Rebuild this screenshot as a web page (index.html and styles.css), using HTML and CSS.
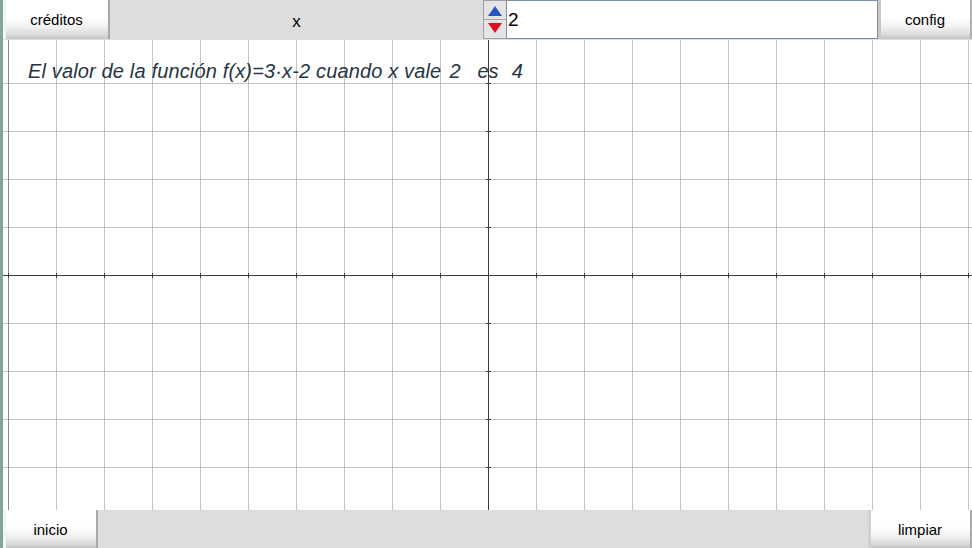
FILE: index.html
```html
<!DOCTYPE html>
<html>
<head>
<meta charset="utf-8">
<link rel="stylesheet" href="styles.css">
</head>
<body>
<div class="app">
  <div class="bar top">
    <button class="btn btn-creditos">créditos</button>
    <div class="label">x</div>
    <div class="spinner">
      <div class="spin up"><svg width="14" height="10" viewBox="0 0 14 10"><polygon points="7,0 14,10 0,10" fill="#2a55c8"/></svg></div>
      <div class="spin down"><svg width="14" height="10" viewBox="0 0 14 10"><polygon points="0,0 14,0 7,10" fill="#e01020"/></svg></div>
    </div>
    <div class="field">2</div>
    <button class="btn btn-config">config</button>
  </div>
  <div class="canvas">
    <svg class="grid" width="969" height="470" viewBox="0 0 969 470">
      <g stroke="#c4c4c4" stroke-width="1" shape-rendering="crispEdges">
        <line x1="53.5" y1="0" x2="53.5" y2="470"/>
        <line x1="101.5" y1="0" x2="101.5" y2="470"/>
        <line x1="149.5" y1="0" x2="149.5" y2="470"/>
        <line x1="197.5" y1="0" x2="197.5" y2="470"/>
        <line x1="245.5" y1="0" x2="245.5" y2="470"/>
        <line x1="293.5" y1="0" x2="293.5" y2="470"/>
        <line x1="341.5" y1="0" x2="341.5" y2="470"/>
        <line x1="389.5" y1="0" x2="389.5" y2="470"/>
        <line x1="437.5" y1="0" x2="437.5" y2="470"/>
        <line x1="533.5" y1="0" x2="533.5" y2="470"/>
        <line x1="581.5" y1="0" x2="581.5" y2="470"/>
        <line x1="629.5" y1="0" x2="629.5" y2="470"/>
        <line x1="677.5" y1="0" x2="677.5" y2="470"/>
        <line x1="725.5" y1="0" x2="725.5" y2="470"/>
        <line x1="773.5" y1="0" x2="773.5" y2="470"/>
        <line x1="821.5" y1="0" x2="821.5" y2="470"/>
        <line x1="869.5" y1="0" x2="869.5" y2="470"/>
        <line x1="917.5" y1="0" x2="917.5" y2="470"/>
        <line x1="965.5" y1="0" x2="965.5" y2="470"/>
        <line x1="0" y1="43.5" x2="969" y2="43.5"/>
        <line x1="0" y1="91.5" x2="969" y2="91.5"/>
        <line x1="0" y1="139.5" x2="969" y2="139.5"/>
        <line x1="0" y1="187.5" x2="969" y2="187.5"/>
        <line x1="0" y1="283.5" x2="969" y2="283.5"/>
        <line x1="0" y1="331.5" x2="969" y2="331.5"/>
        <line x1="0" y1="379.5" x2="969" y2="379.5"/>
        <line x1="0" y1="427.5" x2="969" y2="427.5"/>
      </g>
      <line x1="5.5" y1="0" x2="5.5" y2="470" stroke="#8a8a8a" shape-rendering="crispEdges"/>
      <g stroke="#3c3c3c" stroke-width="1" shape-rendering="crispEdges">
        <line x1="485.5" y1="0" x2="485.5" y2="470"/>
        <line x1="0" y1="235.5" x2="969" y2="235.5"/>
        <path d="M5.5 233v5M53.5 233v5M101.5 233v5M149.5 233v5M197.5 233v5M245.5 233v5M293.5 233v5M341.5 233v5M389.5 233v5M437.5 233v5M533.5 233v5M581.5 233v5M629.5 233v5M677.5 233v5M725.5 233v5M773.5 233v5M821.5 233v5M869.5 233v5M917.5 233v5M965.5 233v5"/>
        <path d="M483 43.5h5M483 91.5h5M483 139.5h5M483 187.5h5M483 283.5h5M483 331.5h5M483 379.5h5M483 427.5h5"/>
      </g>
    </svg>
    <div class="message"><span class="m-text">El valor de la función f(x)=3·x-2 cuando x vale</span><span class="m-val1">2</span><span class="m-es">es</span><span class="m-val2">4</span></div>
  </div>
  <div class="bar bottom">
    <button class="btn btn-inicio">inicio</button>
    <div class="fill"></div>
    <button class="btn btn-limpiar">limpiar</button>
  </div>
</div>
</body>
</html>
```

FILE: styles.css
```css
html, body {
  margin: 0;
  padding: 0;
  background: #ffffff;
}
.app {
  width: 972px;
  height: 548px;
  display: flex;
  flex-direction: column;
  border-left: 3px solid #7aa89e;
  box-sizing: border-box;
  overflow: hidden;
  font-family: "Liberation Sans", Arial, sans-serif;
}
.bar {
  display: flex;
  flex: none;
  background: #dcdddf;
}
.top {
  height: 40px;
}
.bottom {
  height: 38px;
}
.btn {
  flex: none;
  border: none;
  margin: 0;
  padding: 0;
  font-family: "Liberation Sans", Arial, sans-serif;
  font-size: 15px;
  color: #000;
  background: linear-gradient(to bottom, #ffffff 0%, #ffffff 45%, #f0f0f0 70%, #d8d8d8 90%, #c4c4c4 100%);
  box-shadow: inset -2px 0 0 #a8a8a8, inset 3px 0 0 #f4f4f4;
  cursor: default;
}
.btn-creditos {
  width: 107px;
  height: 39px;
}
.btn-config {
  width: 94px;
  height: 39px;
  box-shadow: inset 3px 0 0 #c8c8c8, inset -2px 0 0 #b0b0b0;
}
.btn-inicio {
  width: 95px;
  height: 38px;
}
.btn-limpiar {
  width: 104px;
  height: 38px;
  box-shadow: inset 3px 0 0 #d0d0d0, inset -2px 0 0 #a8a8a8;
}
.label {
  flex: 1;
  display: flex;
  align-items: center;
  justify-content: center;
  font-size: 17px;
  color: #000;
  padding-top: 3px;
}
.spinner {
  flex: none;
  width: 23px;
  height: 39px;
  display: flex;
  flex-direction: column;
  border: 1px solid #a0a0a0;
  border-right: none;
  box-sizing: border-box;
  background: #e4e4e4;
}
.spin {
  flex: 1;
  display: flex;
  align-items: center;
  justify-content: center;
}
.spin.up {
  border-bottom: 1px solid #a8a8a8;
  padding-top: 2px;
}
.spin.down {
  padding-bottom: 2px;
}
.field {
  flex: none;
  width: 372px;
  height: 39px;
  box-sizing: border-box;
  border: 1px solid #7d8fa0;
  background: #fff;
  font-size: 19px;
  padding-left: 1px;
  line-height: 37px;
  color: #000;
}
.fill {
  flex: 1;
}
.canvas {
  flex: 1;
  position: relative;
  background: #fff;
}
.grid {
  display: block;
}
.message {
  position: absolute;
  left: 25px;
  top: 20px;
  display: flex;
  font-size: 20px;
  font-style: italic;
  color: #263544;
  white-space: pre;
}
.m-text {
  letter-spacing: 0.15px;
}
.m-val1 {
  margin-left: 8px;
}
.m-es {
  margin-left: 17px;
}
.m-val2 {
  margin-left: 13px;
}
```
